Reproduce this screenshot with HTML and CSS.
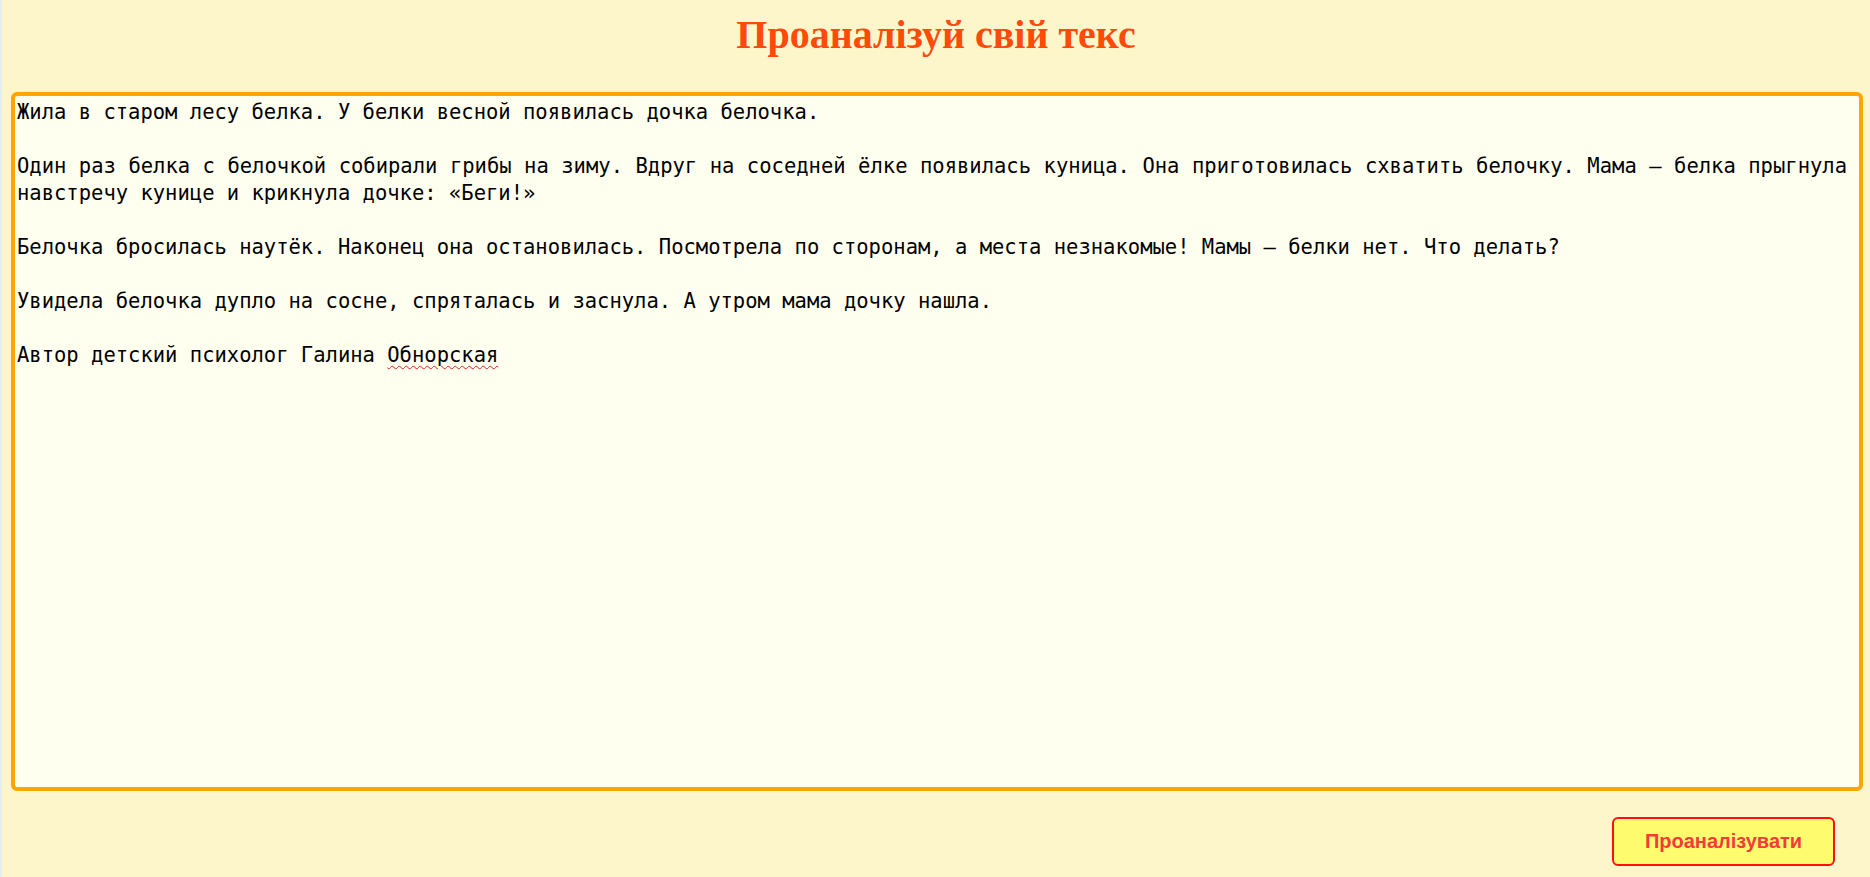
FILE: index.html
```html
<!DOCTYPE html>
<html lang="uk">
<head>
<meta charset="utf-8">
<title>Проаналізуй свій текс</title>
<link rel="stylesheet" href="styles.css">
</head>
<body>
<div class="page">
  <h1 class="title">Проаналізуй свій текс</h1>
  <div class="editor" contenteditable="true" role="textbox" aria-multiline="true" spellcheck="false"><p>Жила в старом лесу белка. У белки весной появилась дочка белочка.</p><p>Один раз белка с белочкой собирали грибы на зиму. Вдруг на соседней ёлке появилась куница. Она приготовилась схватить белочку. Мама – белка прыгнула навстречу кунице и крикнула дочке: «Беги!»</p><p>Белочка бросилась наутёк. Наконец она остановилась. Посмотрела по сторонам, а места незнакомые! Мамы – белки нет. Что делать?</p><p>Увидела белочка дупло на сосне, спряталась и заснула. А утром мама дочку нашла.</p><p>Автор детский психолог Галина <span class="misspelled">Обнорская</span></p></div>
  <div class="actions">
    <button class="analyze" type="button">Проаналізувати</button>
  </div>
</div>
</body>
</html>
```

FILE: styles.css
```css
html, body {
  margin: 0;
  padding: 0;
  height: 100%;
}

body {
  background: #fcf6ca;
}

.page {
  box-sizing: border-box;
  height: 877px;
  border-left: 2px solid #e4eef0;
  padding-top: 12px;
  display: flex;
  flex-direction: column;
}

.title {
  margin: 0 0 34px;
  font-family: "Liberation Serif", "Times New Roman", serif;
  font-size: 40px;
  font-weight: bold;
  line-height: 46px;
  color: #ff4a0a;
  text-align: center;
}

.editor {
  box-sizing: border-box;
  margin-left: 9px;
  width: 1852px;
  height: 699px;
  border: 4px solid #ffa500;
  border-radius: 6px;
  background: #fffff0;
  padding: 3px 12px 2px 2px;
  font-family: "DejaVu Sans Mono", monospace;
  font-size: 20.5px;
  line-height: 27px;
  color: #000;
  text-align: justify;
  overflow: hidden;
  outline: none;
}

.editor p {
  margin: 0 0 27px;
}

.misspelled {
  text-decoration: underline wavy #e02020;
  text-decoration-thickness: 1px;
  text-underline-offset: 3px;
}

.actions {
  display: flex;
  justify-content: flex-end;
  padding: 26px 35px 0 0;
}

.analyze {
  box-sizing: border-box;
  width: 223px;
  height: 49px;
  border: 2px solid #ff1010;
  border-radius: 6px;
  background: #fffb6e;
  color: #f23c3c;
  font-family: "Liberation Sans", Arial, sans-serif;
  font-size: 20px;
  font-weight: bold;
  cursor: pointer;
  padding: 0;
}
```
